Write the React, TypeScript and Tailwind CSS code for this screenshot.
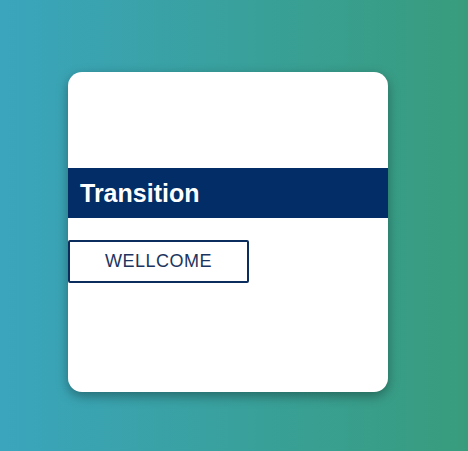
export default function App() {
  return (
    <div className="w-[468px] h-[451px] bg-[linear-gradient(to_right,#3aa5bd,#389c7c)] flex items-start pt-[72px] pl-[68px]" style={{ fontFamily: '"Liberation Sans", Arial, sans-serif' }}>
      <div className="w-[320px] h-[320px] bg-white rounded-[14px] shadow-[0_4px_12px_rgba(0,0,0,0.35)] overflow-hidden flex flex-col pt-[96px]">
        <div className="h-[50px] bg-[#022d66] flex items-center pl-[12px]">
          <span className="text-white font-bold text-[25px] leading-none">Transition</span>
        </div>
        <button className="mt-[22px] w-[181px] h-[43px] border-2 border-[#0a2d5e] rounded-[2px] text-[#1c3560] text-[18px] tracking-[0.5px] flex items-center justify-center">
          WELLCOME
        </button>
      </div>
    </div>
  );
}
